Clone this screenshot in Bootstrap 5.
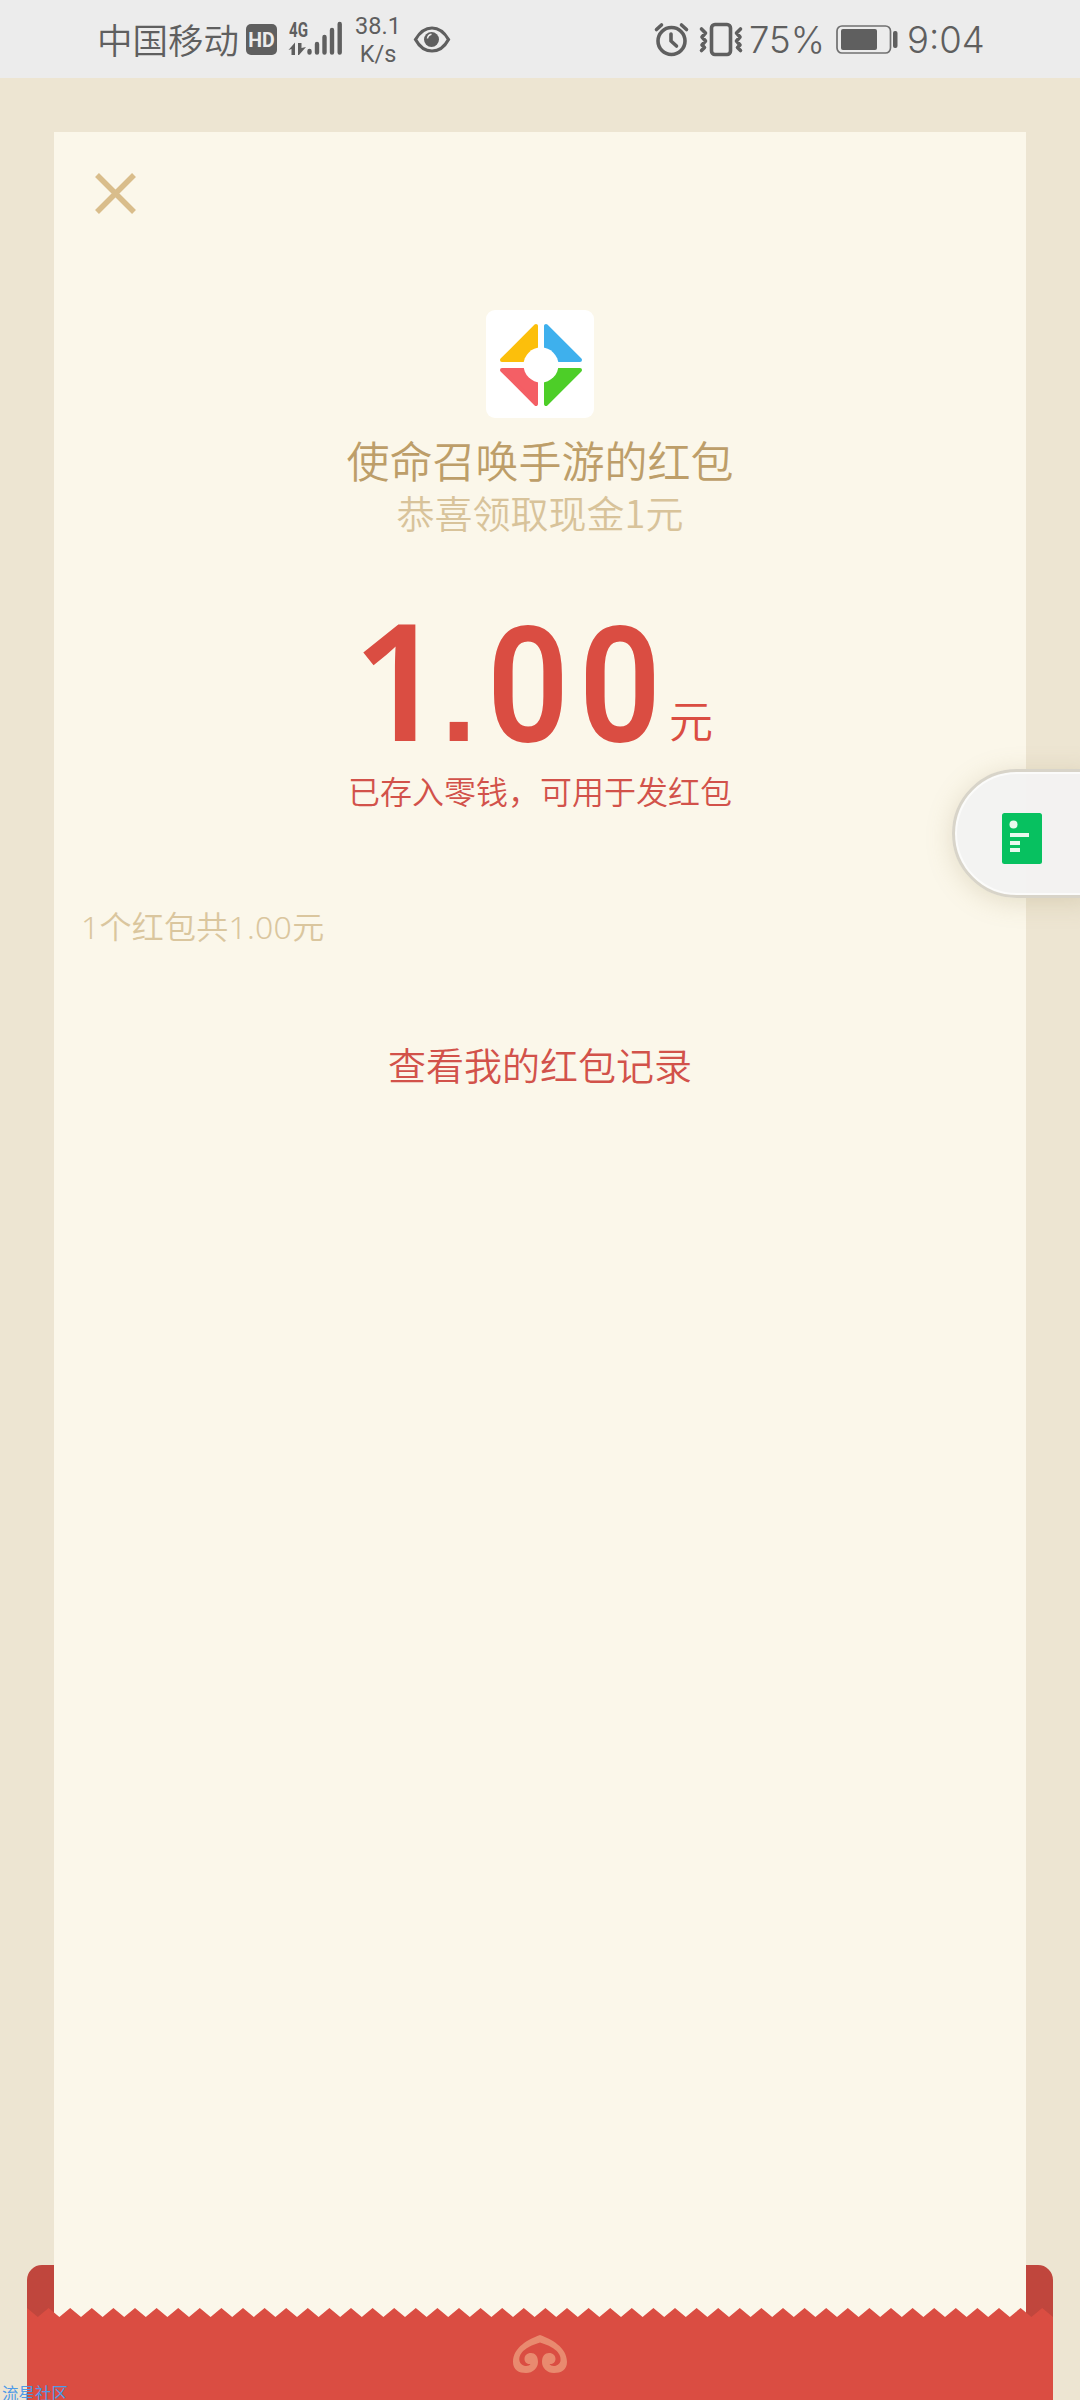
<!DOCTYPE html>
<html lang="zh-CN">
<head>
<meta charset="utf-8">
<meta name="viewport" content="width=device-width, initial-scale=1">
<title>红包详情</title>
<link href="https://cdn.jsdelivr.net/npm/bootstrap@5.3.0/dist/css/bootstrap.min.css" rel="stylesheet">
<style>
body{background:#ede5d2;font-family:"Noto Sans","Noto Sans CJK SC",sans-serif;font-weight:350;width:1080px;height:2400px;overflow:hidden}
svg{display:block;flex:none}
.statusbar{height:78px;background:#ececec;color:#5f5f5f;padding-left:97px}
.statusbar span{white-space:nowrap;flex:none}
.carrier{font-family:"Noto Sans CJK SC",sans-serif;font-size:35.5px;line-height:78px;width:149px}
.netspeed{font-family:Roboto,sans-serif;font-size:23.5px;line-height:28px;width:50px;margin:2px 10px 0 -3px;text-align:center;font-weight:400}
.digits{font-family:Inter,sans-serif;font-size:36.5px;line-height:78px;font-weight:300;padding-top:1px}
.stage{height:2322px;padding:54px 54px 0}
.sheet{background:#fbf7ea;height:2268px}
.closebtn{margin:41px 0 0 41px}
.logo-tile{width:108px;height:108px;border-radius:9px;margin-top:96px}
.sender{font-family:"Noto Sans CJK SC",sans-serif;color:#bd9e69;font-size:43px;line-height:60px;margin-top:11px}
.wish{font-family:"Noto Sans CJK SC",sans-serif;color:#d8c39a;font-size:38px;line-height:46px}
.amount{height:140px;margin-top:76px;color:#da4d42;padding-right:7px}
.unit{font-family:"Noto Sans CJK SC",sans-serif;font-size:44px;line-height:64px;margin-left:9px}
.redtext{color:#d2524a;font-family:"Noto Sans CJK SC",sans-serif}
.saved{font-size:32px;line-height:48px;margin-top:15px}
.total{color:#dac69e;font-size:32px;line-height:48px;letter-spacing:.25px;margin:89px 0 0 27px}
.records{font-size:38px;line-height:56px;margin-top:85px}
.floating{left:952px;top:769px;width:140px;height:129px;border-radius:65px 0 0 65px;background:#f2f2f1f5;border:3px solid #d8d4c9;box-shadow:0 4px 26px #a0906040,inset 0 0 0 2px #fbfbfa;padding:9px 0 0 47px;z-index:3}
.envelope{left:27px;top:2265px;z-index:2}
.corner-text{left:2px;top:2381px;font-family:"Noto Sans CJK SC",sans-serif;font-size:16.5px;line-height:24px;font-weight:400;color:#4f9be8;z-index:4}
</style>
<script src="https://cdn.jsdelivr.net/npm/bootstrap@5.3.0/dist/js/bootstrap.bundle.min.js"></script>
</head>
<body class="position-relative m-0">
<header class="statusbar d-flex align-items-center">
<span class="carrier">中国移动</span>
<svg width="184" height="78" viewBox="246 0 184 78" style="margin-right:-74px">
<rect x="246" y="24" width="31" height="31" rx="5" fill="#5f5f5f"/>
<text x="248.3" y="47" font-family="Roboto" font-weight="700" font-size="21" textLength="26.5" lengthAdjust="spacingAndGlyphs" fill="#ececec">HD</text>
<text x="289" y="37" font-family="Roboto" font-weight="700" font-size="20.5" textLength="19" lengthAdjust="spacingAndGlyphs" fill="#5f5f5f">4G</text>
<path d="M288.500 50l6.500-7.500V55h-3.500v-6zM298 43h3.500v5l4.500-1-7 8h-1z" fill="#5f5f5f"/>
<g stroke="#5f5f5f" stroke-width="4.400" stroke-linecap="round"><path d="M309.500 51v1.500M317 44v8.500M324.500 37v15.500M332 30v22.500M339.700 24v28.500"/></g>
</svg>
<span class="netspeed">38.1<br>K/s</span>
<svg width="38" height="30" viewBox="413 24 38 30" fill="none" stroke="#5f5f5f" stroke-width="3.200"><path d="M415.500 39.500C419 33.500 424.500 28 432 28s13 5.500 16.500 11.500C445 46 439.500 51 432 51s-13-5-16.500-11.500z"/><circle cx="431.500" cy="39.500" r="7.500" fill="#5f5f5f" stroke="none"/><path d="M427.500 38.500a5 5 0 0 1 4-4.200" stroke="#ececec" stroke-width="1.500"/></svg>
<svg width="100" height="78" viewBox="652 0 100 78" style="margin-left:201px;margin-right:-3px" fill="none" stroke="#5f5f5f" stroke-width="3.600" stroke-linecap="round" stroke-linejoin="round"><circle cx="671.500" cy="41" r="13.500"/><path d="M671 34v7l5.500 5M656.500 29.500l5-4.500M681.500 25l5 4.500"/><rect x="711.500" y="24.500" width="19" height="30" rx="3.500"/><path d="M701.500 29l4 4-3.500 4 3.500 4-3.500 4 2.500 2.500-3 3M740.500 29l-4 4 3.500 4-3.500 4 3.500 4-2.500 2.500 3 3"/></svg>
<span class="digits" style="width:87px">75%</span>
<svg width="62" height="30" viewBox="836 24 62 30" fill="#5f5f5f"><rect x="837" y="26" width="53.500" height="27" rx="5" fill="none" stroke="#707070" stroke-width="1.700"/><rect x="841" y="29" width="36" height="21" rx="2"/><rect x="893" y="31" width="4.500" height="17" rx="2"/></svg>
<span class="digits" style="margin-left:9px">9:04</span>
</header>

<main class="stage">
<section class="sheet d-flex flex-column align-items-center">
<div class="closebtn align-self-start"><svg width="41" height="41" viewBox="0 0 41 41"><path d="M2 2l37 37M39 2L2 39" stroke="#d9bd8b" stroke-width="5.500"/></svg></div>
<div class="logo-tile bg-white"><svg width="108" height="108" viewBox="0 0 108 108">
<g stroke-width="4" stroke-linejoin="round">
<path d="M50 16v34H16z" fill="#fcbf0b" stroke="#fcbf0b"/>
<path d="M60 16v34h34z" fill="#3eb0ed" stroke="#3eb0ed"/>
<path d="M50 94V60H16z" fill="#f45f65" stroke="#f45f65"/>
<path d="M60 94V60h34z" fill="#4dce28" stroke="#4dce28"/></g>
<circle cx="55" cy="55" r="17.500" fill="#fff"/></svg></div>
<div class="sender">使命召唤手游的红包</div>
<div class="wish">恭喜领取现金1元</div>
<div class="amount d-flex align-items-end"><svg width="300" height="140" viewBox="360 611 300 140" fill="#da4d42" font-size="162"><text x="352" y="741" font-family="Noto Sans" font-weight="600">1</text><text x="441" y="741" font-family="Liberation Sans" font-weight="700" font-size="128">.</text><text x="487" y="741" font-family="Roboto" font-weight="600" textLength="82" lengthAdjust="spacingAndGlyphs">0</text><text x="579" y="741" font-family="Roboto" font-weight="600" textLength="82" lengthAdjust="spacingAndGlyphs">0</text></svg><span class="unit">元</span></div>
<div class="redtext saved">已存入零钱，可用于发红包</div>
<div class="total align-self-start">1个红包共1.00元</div>
<div class="redtext records">查看我的红包记录</div>
</section>
</main>

<aside class="floating position-absolute d-flex align-items-center"><svg width="41" height="52" viewBox="0 0 41 52"><rect width="40" height="51" rx="2.500" y="1" fill="#07c160"/><g fill="#e8f9ee"><circle cx="11.500" cy="12.500" r="4"/><path d="M8 21h19v4H8zM8 29h10v4H8zM8 36h10v4H8z"/></g></svg></aside>

<svg class="envelope position-absolute" width="1026" height="135" viewBox="0 0 1026 135">
<path d="M0 60V15A15 15 0 0 1 15 0h12v60zM999 60V0h12a15 15 0 0 1 15 15v45z" fill="#c0463d"/>
<path id="teeth" fill="#da4d42"/>
<path fill="#e98a6f" d="M513 70C524 74 540 82 540 97c0 8-6 11-13 11-7 0-12-5-12-11 0-6 3-9 7-9 4 0 6.500 2.500 6.500 6s-3 5.500-6 5c1.500 3 9.500 3 11-3 1.500-9-9-15-20.500-18.500C501.500 81 491 87 492.500 96c1.500 6 9.500 6 11 3-3 .500-6-1.500-6-5s2.500-6 6.500-6c4 0 7 3 7 9 0 6-5 11-12 11-7 0-13-3-13-11 0-15 16-23 27-27z"/>
</svg>
<div class="corner-text position-absolute">流星社区</div>
<script>
// Torn edge of the envelope: a regular row of triangular teeth.
let edge='M0 43';
for(let i=1;i<=95;i++) edge+=`L${(i*10.8).toFixed(1)} ${i%2?52:43}`;
document.getElementById('teeth').setAttribute('d',edge+'V135H0z');
</script>
</body>
</html>
